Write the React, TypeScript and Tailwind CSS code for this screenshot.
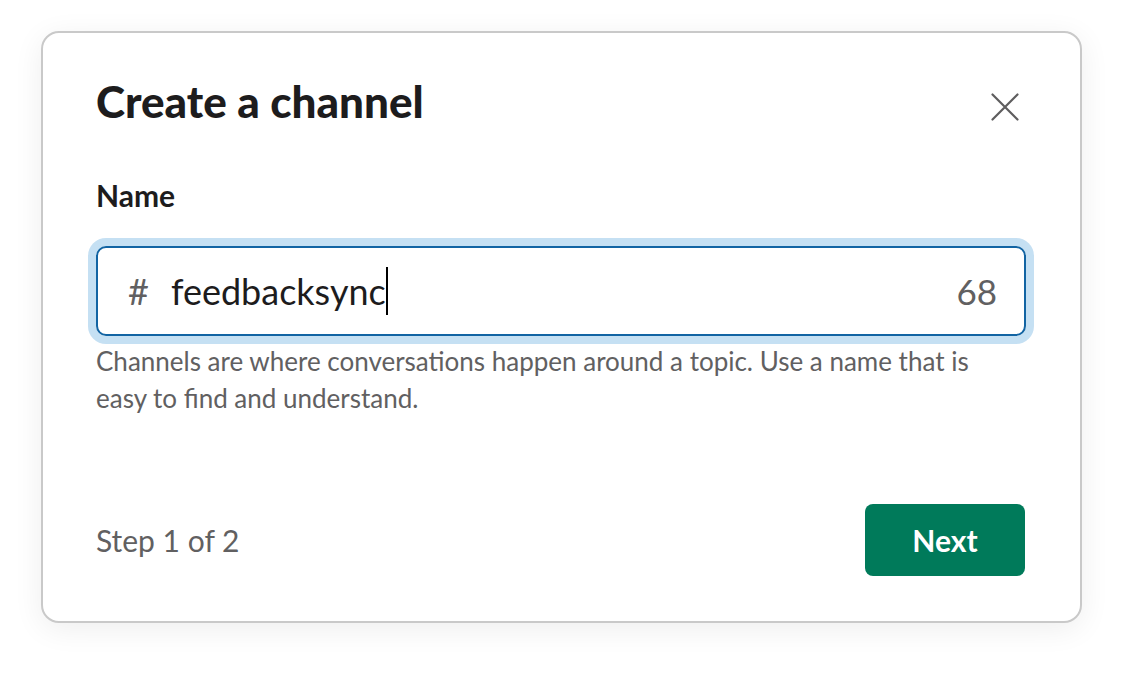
import React from 'react';

function CloseIcon() {
  return (
    <svg className="w-[28px] h-[28px]" viewBox="0 0 28 28" fill="none" stroke="#5e5d5e" strokeWidth={2.2} strokeLinecap="round">
      <path d="M1.5 1.5l25 25M26.5 1.5l-25 25" />
    </svg>
  );
}

export default function App() {
  return (
    <div className="min-h-[675px] w-[1123px] bg-white pt-[31px] pl-[41px] font-[Lato,'Liberation_Sans',sans-serif]">
      <div className="w-[1041px] h-[592px] bg-white border-2 border-[#c9c9c9] rounded-[18px] shadow-[0_6px_30px_rgba(0,0,0,0.07)] pt-[40px] pl-[53px] pr-[54px] pb-[45px] flex flex-col">
        {/* Header */}
        <div className="flex items-start justify-between">
          <h1 className="text-[44px] leading-[56px] font-black text-[#1d1c1d]">
            Create a channel
          </h1>
          <button className="mt-[20px] mr-[7px]" aria-label="Close">
            <CloseIcon />
          </button>
        </div>

        {/* Name field */}
        <label className="mt-[48px] text-[30px] leading-[36px] font-bold text-[#1d1c1d]">Name</label>
        <div className="mt-[33px] h-[90px] border-2 border-[#1264a3] rounded-[10px] shadow-[0_0_0_8px_#c5e0f3] flex items-center pl-[30px] pr-[27px]">
          <span className="text-[36px] text-[#616061]">#</span>
          <span className="ml-[22px] text-[36px] text-[#1d1c1d] flex items-center">
            feedbacksync
            <span className="inline-block w-[2px] h-[48px] bg-black" />
          </span>
          <span className="ml-auto text-[35px] text-[#616061]">68</span>
        </div>
        <p className="mt-[7px] text-[26px] leading-[37px] text-[#616061]">
          Channels are where conversations happen around a topic. Use a name that is
          <br />
          easy to find and understand.
        </p>

        {/* Footer */}
        <div className="mt-auto flex items-center justify-between">
          <span className="text-[30px] text-[#616061]">Step 1 of 2</span>
          <button className="mr-[1px] w-[160px] h-[72px] rounded-[8px] bg-[#007a5a] text-white text-[30px] font-bold">
            Next
          </button>
        </div>
      </div>
    </div>
  );
}
